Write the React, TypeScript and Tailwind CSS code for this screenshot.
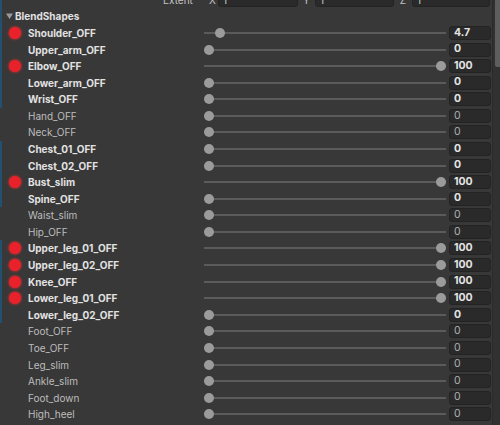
type Shape = { name: string; value: number; bold?: boolean; dot?: boolean }

const shapes: Shape[] = [
  { name: "Shoulder_OFF", value: 4.7, bold: true, dot: true },
  { name: "Upper_arm_OFF", value: 0, bold: true },
  { name: "Elbow_OFF", value: 100, bold: true, dot: true },
  { name: "Lower_arm_OFF", value: 0, bold: true },
  { name: "Wrist_OFF", value: 0, bold: true },
  { name: "Hand_OFF", value: 0 },
  { name: "Neck_OFF", value: 0 },
  { name: "Chest_01_OFF", value: 0, bold: true },
  { name: "Chest_02_OFF", value: 0, bold: true },
  { name: "Bust_slim", value: 100, bold: true, dot: true },
  { name: "Spine_OFF", value: 0, bold: true },
  { name: "Waist_slim", value: 0 },
  { name: "Hip_OFF", value: 0 },
  { name: "Upper_leg_01_OFF", value: 100, bold: true, dot: true },
  { name: "Upper_leg_02_OFF", value: 100, bold: true, dot: true },
  { name: "Knee_OFF", value: 100, bold: true, dot: true },
  { name: "Lower_leg_01_OFF", value: 100, bold: true, dot: true },
  { name: "Lower_leg_02_OFF", value: 0, bold: true },
  { name: "Foot_OFF", value: 0 },
  { name: "Toe_OFF", value: 0 },
  { name: "Leg_slim", value: 0 },
  { name: "Ankle_slim", value: 0 },
  { name: "Foot_down", value: 0 },
  { name: "High_heel", value: 0 },
]

const Strip = ({ on }: { on?: boolean }) => (
  <div className={`w-[2px] h-full shrink-0 ${on ? "bg-[#24506f]" : ""}`} />
)

const Slider = ({ value }: { value: number }) => (
  <div className="relative w-[242px] h-full shrink-0">
    <div className="absolute left-0 right-0 top-1/2 -translate-y-1/2 h-[2px] bg-[#5b5b5b]" />
    <div
      className="absolute top-1/2 -translate-y-1/2 w-[10px] h-[10px] rounded-full bg-[#9b9b9b]"
      style={{ left: `${value / 100 * 232}px` }}
    />
  </div>
)

const ShapeRow = (props: Shape) => (
  <div className="flex items-center h-[16.58px]">
    <Strip on={props.bold} />
    <div className="w-[26px] h-full flex items-center justify-center shrink-0">
      {props.dot && <div className="w-[12px] h-[12px] rounded-full bg-[#e8212b] shadow-[0_0_3px_#ff3030]" />}
    </div>
    <div className={`w-[176px] shrink-0 whitespace-nowrap ${props.bold ? "font-bold text-[#e2e2e2]" : "text-[#bdbdbd]"}`}>
      {props.name}
    </div>
    <Slider value={props.value} />
    <div className={`ml-[3px] w-[42px] h-[14px] shrink-0 flex items-center pl-[4px] rounded-[3px] bg-[#2a2a2a] border border-[#232323] text-[10.5px] ${props.bold ? "font-bold text-[#e4e4e4]" : "text-[#b0b0b0]"}`}>
      {props.value}
    </div>
  </div>
)

const Field = () => (
  <div className="h-[15px] rounded-[3px] bg-[#2a2a2a] border border-[#232323] flex items-center pl-[4px] text-[#c8c8c8]">1</div>
)

export default function App() {
  return (
    <div className="w-[500px] h-[425px] overflow-hidden bg-[#383838] flex text-[10px] leading-none font-['Inter','Noto_Sans',sans-serif]">
      <div className="w-[492px] flex flex-col shrink-0">
        <div className="flex items-center h-[16.58px] mt-[-8.5px] text-[#c4c4c4]">
          <Strip on />
          <div className="w-[161px] shrink-0" />
          <div className="w-[46px] shrink-0">Extent</div>
          <div className="w-[9px] shrink-0">X</div>
          <div className="w-[80px] shrink-0"><Field /></div>
          <div className="w-[17px] shrink-0 text-center">Y</div>
          <div className="w-[79px] shrink-0"><Field /></div>
          <div className="w-[18px] shrink-0 text-center">Z</div>
          <div className="w-[78px] shrink-0"><Field /></div>
        </div>
        <div className="flex items-center h-[16.58px]">
          <Strip on />
          <div className="w-[4px]" />
          <svg width="7" height="6" viewBox="0 0 7 6" className="shrink-0">
            <path d="M0 0.5 L7 0.5 L3.5 6 Z" fill="#9a9a9a" />
          </svg>
          <div className="ml-[2px] font-bold text-[#e2e2e2]">BlendShapes</div>
        </div>
        {shapes.map(s => <ShapeRow key={s.name} {...s} />)}
      </div>
      <div className="w-[8px] h-full bg-[#313131] border-l border-[#2a2a2a] flex justify-end">
        <div className="w-[5px] h-[67px] bg-[#5e5e5e] rounded-bl-[2px]" />
      </div>
    </div>
  )
}
